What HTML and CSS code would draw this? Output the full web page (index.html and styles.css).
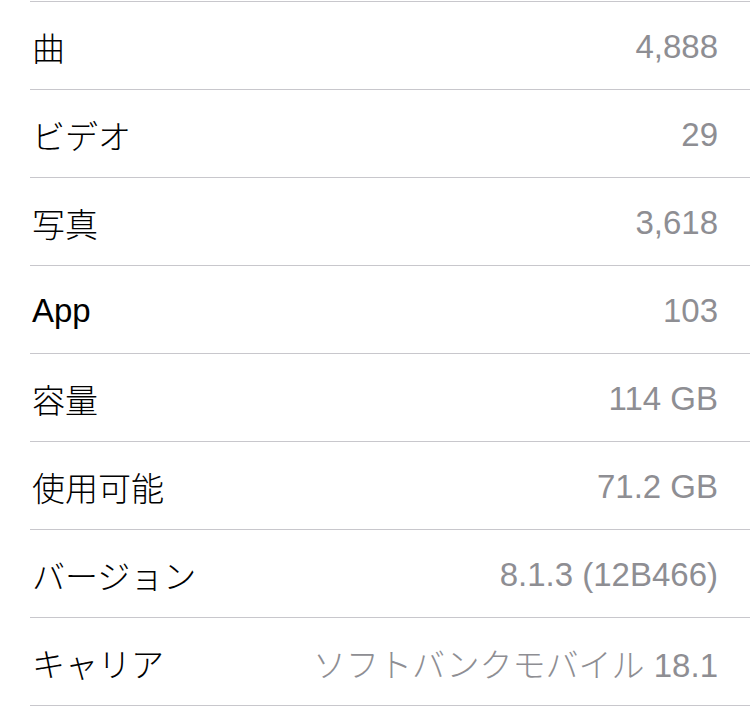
FILE: index.html
```html
<!DOCTYPE html>
<html lang="ja">
<head>
<meta charset="UTF-8" />
<meta name="viewport" content="width=device-width, initial-scale=1" />
<title>情報</title>
<link rel="stylesheet" href="styles.css">
</head>
<body>

<ul class="info-list">
  <li class="row"><span class="label">曲</span><span class="value">4,888</span></li>
  <li class="row"><span class="label">ビデオ</span><span class="value">29</span></li>
  <li class="row"><span class="label">写真</span><span class="value">3,618</span></li>
  <li class="row"><span class="label">App</span><span class="value">103</span></li>
  <li class="row"><span class="label">容量</span><span class="value">114 GB</span></li>
  <li class="row"><span class="label">使用可能</span><span class="value">71.2 GB</span></li>
  <li class="row"><span class="label">バージョン</span><span class="value">8.1.3 (12B466)</span></li>
  <li class="row"><span class="label">キャリア</span><span class="value">ソフトバンクモバイル 18.1</span></li>
</ul>

</body>
</html>
```

FILE: styles.css
```css
body { margin: 0; background: #fff; font-family: "Liberation Sans", "Noto Sans CJK JP", sans-serif; font-weight: 300; }
.info-list { list-style: none; margin: 1px 0 0 30px; padding: 0; border-top: 1px solid #c8c7cc; }
.row { display: flex; justify-content: space-between; align-items: center; box-sizing: border-box; height: 88px; padding: 3px 32px 0 2px; border-bottom: 1px solid #c8c7cc; font-size: 33px; }
.label { color: #000; }
.value { color: #8e8e93; }
```
